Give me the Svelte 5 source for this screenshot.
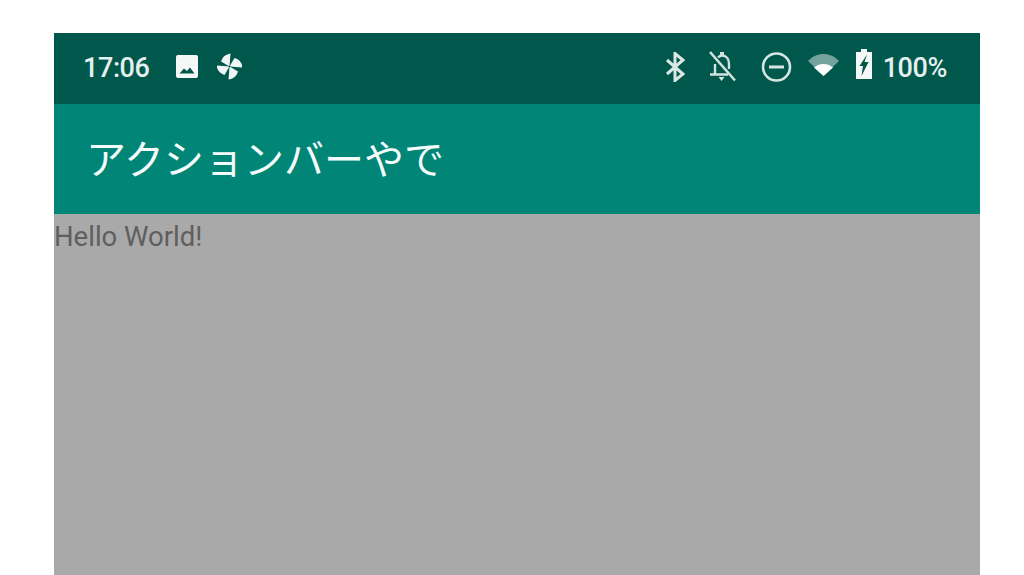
<script>
  const title = 'アクションバーやで';
  const blades = [0, 90, 180, 270];
</script>

<div class="page">
  <div class="phone">
    <div class="status">
      <div class="group">
        <span class="time">17:06</span>
        <svg class="img" viewBox="0 0 22 23" width="22" height="23"><rect width="22" height="23" rx="2" fill="#f4f8f7"/><path fill="#00574b" d="M3.500 18.500L8 13.500 11 16 14 12.500 18.500 18.500z"/></svg>
        <svg class="pin" viewBox="0 0 25 27" width="25" height="27">
          {#each blades as angle}
            <path fill="#f0f6f5" transform="rotate({angle} 12.500 13.500)" d="M12.500 13.500L13.500 0.500Q6 1.500 4 8.500z"/>
          {/each}
          <circle cx="12.500" cy="13.500" r="1" fill="#00574b"/>
        </svg>
      </div>
      <div class="group right">
        <svg class="bt" viewBox="0 0 20 30" width="20" height="30"><path fill="none" stroke="#dbe8e5" stroke-width="3" d="M2 8L18 22 10 28.500V1.500L18 8 2 22"/></svg>
        <svg class="bell" viewBox="0 0 30 31" width="30" height="31"><path fill="none" stroke="#d3e2df" stroke-width="2.400" d="M3 23.500H21M8 23.500V13M11 6.500C12.500 5 14 4.500 15 4.500 19.500 4.500 22 8 22 13V18"/><path fill="#d3e2df" d="M13 1h4v3h-4zM11.500 26h6L14.500 30z"/><path stroke="#d3e2df" stroke-width="2.600" d="M3 1L28 29.500"/></svg>
        <svg class="dnd" viewBox="0 0 31 30" width="31" height="30"><circle cx="15.500" cy="15" r="13.500" fill="none" stroke="#d8e6e3" stroke-width="2.600"/><path fill="#d8e6e3" d="M8 13.500h15v3H8z"/></svg>
        <svg class="wifi" viewBox="0 0 31 22" width="31" height="22"><path fill="#fff" fill-opacity=".45" d="M0 7C4 2.500 10 0 15.500 0S27 2.500 31 7L15.500 22z"/><path fill="#fff" d="M6 13.500C9 11 12 10 15.500 10S22 11 25 13.500L15.500 22z"/></svg>
        <svg class="battery" viewBox="0 0 16 30" width="16" height="30"><path fill="#f4f8f7" d="M5 0h6v3h5v27H0V3h5z"/><path fill="#00574b" d="M11 5.500L3.500 17H7L5.500 27 12.500 13H8.500z"/></svg>
        <span class="pct">100%</span>
      </div>
    </div>
    <header class="bar"><h1>{title}</h1></header>
    <main class="content"><p>Hello World!</p></main>
  </div>
</div>

<style>
  :global(body) {
    margin: 0;
    background: #fff;
  }
  .page {
    height: 575px;
    padding: 33px 44px 0 54px;
    box-sizing: border-box;
    overflow: hidden;
  }
  .phone {
    height: 542px;
    display: flex;
    flex-direction: column;
  }
  .status {
    flex: 0 0 71px;
    box-sizing: border-box;
    background: #00574b;
    display: flex;
    justify-content: space-between;
    align-items: center;
    padding: 0 33px 4px 29px;
    color: #e6f0ee;
    font-family: Roboto, "Liberation Sans", sans-serif;
    font-size: 27px;
    font-weight: 500;
  }
  .group {
    display: flex;
    align-items: center;
  }
  .time { margin-right: 26px; letter-spacing: -0.4px; margin-top: 2px; }
  .img { margin-right: 19px; }
  .right svg { flex: none; }
  .bell { margin-left: 22px; }
  .dnd { margin-left: 24px; }
  .wifi { margin-left: 16px; margin-bottom: 4px; }
  .battery { margin-left: 17px; margin-bottom: 6px; }
  .pct { margin-left: 11px; letter-spacing: -0.4px; margin-top: 2px; }
  .bar {
    flex: 0 0 110px;
    box-sizing: border-box;
    background: #008577;
    display: flex;
    align-items: center;
    padding: 0 0 4px 32px;
  }
  h1 {
    margin: 0;
    color: #f4fbfa;
    font-family: "Noto Sans CJK JP", sans-serif;
    font-size: 40px;
    font-weight: 400;
    line-height: 1;
  }
  .content {
    flex: 1;
    background: #a9a9a9;
  }
  p {
    margin: 0;
    color: #5f5f5f;
    font-family: Roboto, "Liberation Sans", sans-serif;
    font-size: 27.5px;
    line-height: 46px;
  }
</style>
